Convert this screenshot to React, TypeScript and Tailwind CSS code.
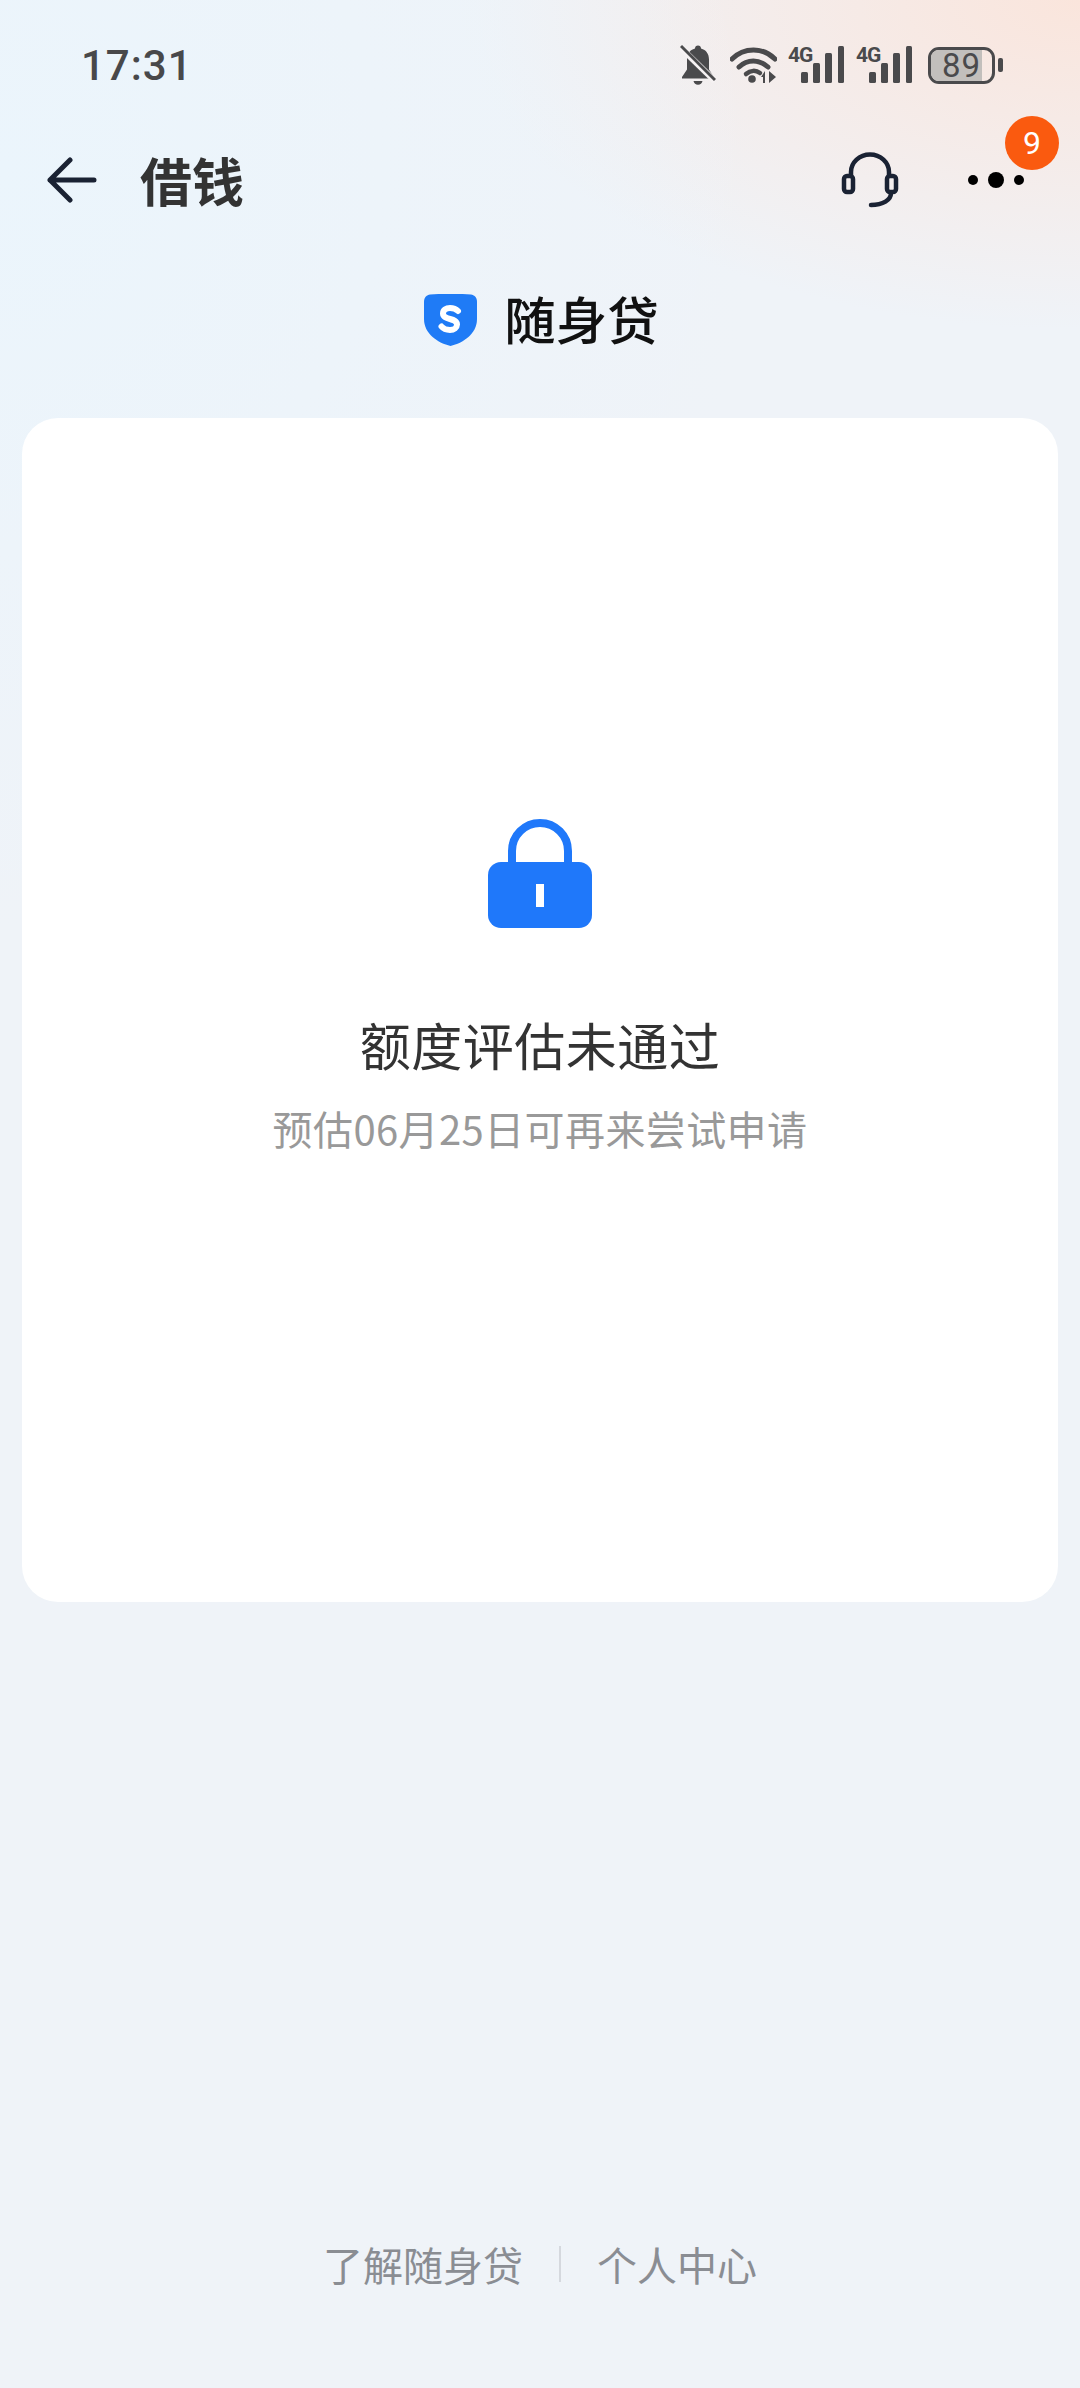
import { Fragment } from 'react';

function SignalIcon() {
  return (
    <svg width="56" height="46" viewBox="0 -4 56 46" fill="#4a4a4c">
      <text x="0" y="16" fontSize="21" fontWeight="700" fontFamily="Roboto, sans-serif" letterSpacing="-1">
        4G
      </text>
      <rect x="13" y="26" width="7" height="11" rx="1.5" />
      <rect x="25" y="17" width="7" height="20" rx="1.5" />
      <rect x="37" y="7" width="7" height="30" rx="1.5" />
      <rect x="50" y="0" width="6" height="37" rx="1.5" />
    </svg>
  );
}

function MutedBellIcon() {
  return (
    <svg width="36" height="42" viewBox="0 0 36 42" fill="#4a4a4c">
      <path d="M18 1.500c1.800 0 3 1.200 3 3 5.200 1.400 8 5.400 8 11v10l5 7.500v1.500H2v-1.500l5-7.500v-10c0-5.600 2.800-9.600 8-11 0-1.800 1.200-3 3-3z" />
      <path d="M13.500 37h9c-.4 2.400-2.200 3.800-4.500 3.800s-4.100-1.400-4.500-3.800z" />
      <path d="M1 4l34 33" stroke="#f6f2f3" strokeWidth="6" />
      <path d="M1 2l34 34" stroke="#4a4a4c" strokeWidth="3" />
    </svg>
  );
}

function WifiIcon() {
  return (
    <svg width="47" height="36" viewBox="0 0 47 36" fill="none">
      <path d="M2 12C14 0 33 0 45 12" stroke="#4a4a4c" strokeWidth="5" strokeLinecap="round" />
      <path d="M9 20c8.500-8 20-8 29 0" stroke="#4a4a4c" strokeWidth="5" strokeLinecap="round" />
      <path d="M16 27c4.500-4 10-4 14-1" stroke="#4a4a4c" strokeWidth="4.500" strokeLinecap="round" />
      <circle cx="22" cy="32" r="3.800" fill="#4a4a4c" />
      <path d="M31 30l4-6v12h-2v-6zM39 24l7 6-7 6z" fill="#4a4a4c" />
    </svg>
  );
}

function BatteryIcon() {
  return (
    <div className="flex items-center gap-[3px]">
      <div className="relative flex h-[37px] w-[67px] items-center justify-center overflow-hidden rounded-[11px] border-[3px] border-[#4a4a4c]">
        <div className="absolute inset-y-0 left-0 w-[51px] bg-[#c2bfbc]" />
        <span className="relative font-['Roboto',sans-serif] text-[33px] leading-none tracking-[1px] text-[#4a4a4c]">89</span>
      </div>
      <div className="h-[14px] w-[5px] rounded-[2px] bg-[#4a4a4c]" />
    </div>
  );
}

function BackArrow() {
  return (
    <svg width="50" height="46" viewBox="0 0 50 46" fill="none" stroke="#1a2233" strokeWidth="5" strokeLinecap="round" strokeLinejoin="round">
      <path d="M47 23H3M23 3L3 23l20 20" />
    </svg>
  );
}

function HeadsetIcon() {
  return (
    <svg width="58" height="56" viewBox="0 0 58 56" fill="none" stroke="#1a2233" strokeWidth="4.500">
      <path d="M10 23v-3a19 17.500 0 0 1 38 0v3" />
      <rect x="3" y="24" width="9" height="16" rx="3" />
      <rect x="46" y="24" width="9" height="16" rx="3" />
      <path d="M50 41c0 7-8 12-20 12" strokeLinecap="round" />
    </svg>
  );
}

function ShieldLogo() {
  return (
    <svg width="53" height="52" viewBox="0 0 53 52">
      <path d="M0 8C0 3 3 1 6 0.500c13-1 28-1 41 0 3 .5 6 2.500 6 7.500v17c0 15-14 24-26.500 27C14 49 0 40 0 25z" fill="#1f7bf6" />
      <path d="M34 17c-2-2-5-3-8-3-4 0-7 2-7 5.500 0 7 14 4 14 11 0 3-3 5.500-7 5.500-3.500 0-6.500-1-8.500-3.500" fill="none" stroke="#fff" strokeWidth="6" strokeLinecap="round" />
    </svg>
  );
}

function LockIcon() {
  return (
    <svg width="104" height="109" viewBox="0 0 104 109">
      <path d="M24 46V32a28 28 0 0 1 56 0v14" fill="none" stroke="#1f78fa" strokeWidth="8" />
      <rect x="0" y="43" width="104" height="66" rx="13" fill="#1f78fa" />
      <rect x="48" y="65" width="8" height="23" fill="#fff" />
    </svg>
  );
}

export default function App() {
  const footerLinks = ['了解随身贷', '个人中心'];

  return (
    <div className="flex h-[2388px] w-[1080px] flex-col overflow-hidden bg-[#eff3f8] bg-[radial-gradient(ellipse_760px_760px_at_0px_170px,#ebf5fc_0%,#ebf5fc00_100%),radial-gradient(ellipse_620px_330px_at_1080px_0px,#fae5dc_0%,#fae5dc00_100%)] font-['Noto_Sans_CJK_SC',sans-serif]">
      <div className="flex h-[130px] shrink-0 items-center justify-between pl-[81px] pr-[77px]">
        <span className="font-['Roboto',sans-serif] text-[42px] font-medium tracking-[1px] text-[#48484a]">17:31</span>
        <div className="flex items-center">
          <MutedBellIcon />
          <div className="ml-[14px]"><WifiIcon /></div>
          <div className="ml-[11px]"><SignalIcon /></div>
          <div className="ml-[12px]"><SignalIcon /></div>
          <div className="ml-[16px]"><BatteryIcon /></div>
        </div>
      </div>

      <div className="flex h-[100px] shrink-0 items-center pl-[47px]">
        <BackArrow />
        <h1 className="ml-[43px] text-[52px] font-bold leading-none text-[#333333]">借钱</h1>
        <div className="ml-[597px]"><HeadsetIcon /></div>
        <div className="relative ml-[69px] flex items-center gap-[10px]">
          <span className="h-[10px] w-[10px] rounded-full bg-black" />
          <span className="h-[16px] w-[16px] rounded-full bg-black" />
          <span className="h-[10px] w-[10px] rounded-full bg-black" />
          <span className="absolute left-[37px] top-[-56px] flex h-[54px] w-[54px] items-center justify-center rounded-full bg-[#fa5a0f] font-['Roboto',sans-serif] text-[32px] text-white">9</span>
        </div>
      </div>

      <div className="flex h-[188px] shrink-0 items-center justify-center gap-[27px] pb-[8px] pl-[3px]">
        <ShieldLogo />
        <span className="mb-[5px] text-[51.500px] font-medium leading-none text-[#111111]">随身贷</span>
      </div>

      <main className="mx-[22px] flex h-[1184px] shrink-0 flex-col items-center rounded-[36px] bg-white pt-[401px]">
        <LockIcon />
        <h2 className="mt-[86px] text-[51px] leading-[60px] tracking-[0.5px] text-[#333333]">额度评估未通过</h2>
        <p className="mt-[29px] text-[40px] leading-[50px] tracking-[0.4px] text-[#999999]">预估06月25日可再来尝试申请</p>
      </main>

      <footer className="mt-auto mb-[104px] flex h-[40px] items-center justify-center text-[40px] leading-none text-[#8a8d93]">
        {footerLinks.map((label, index) => (
          <Fragment key={label}>
            {index > 0 ? <span className="mx-[36px] h-[36px] w-[2px] bg-[#d5d8de]" /> : null}
            <span>{label}</span>
          </Fragment>
        ))}
      </footer>
    </div>
  );
}
